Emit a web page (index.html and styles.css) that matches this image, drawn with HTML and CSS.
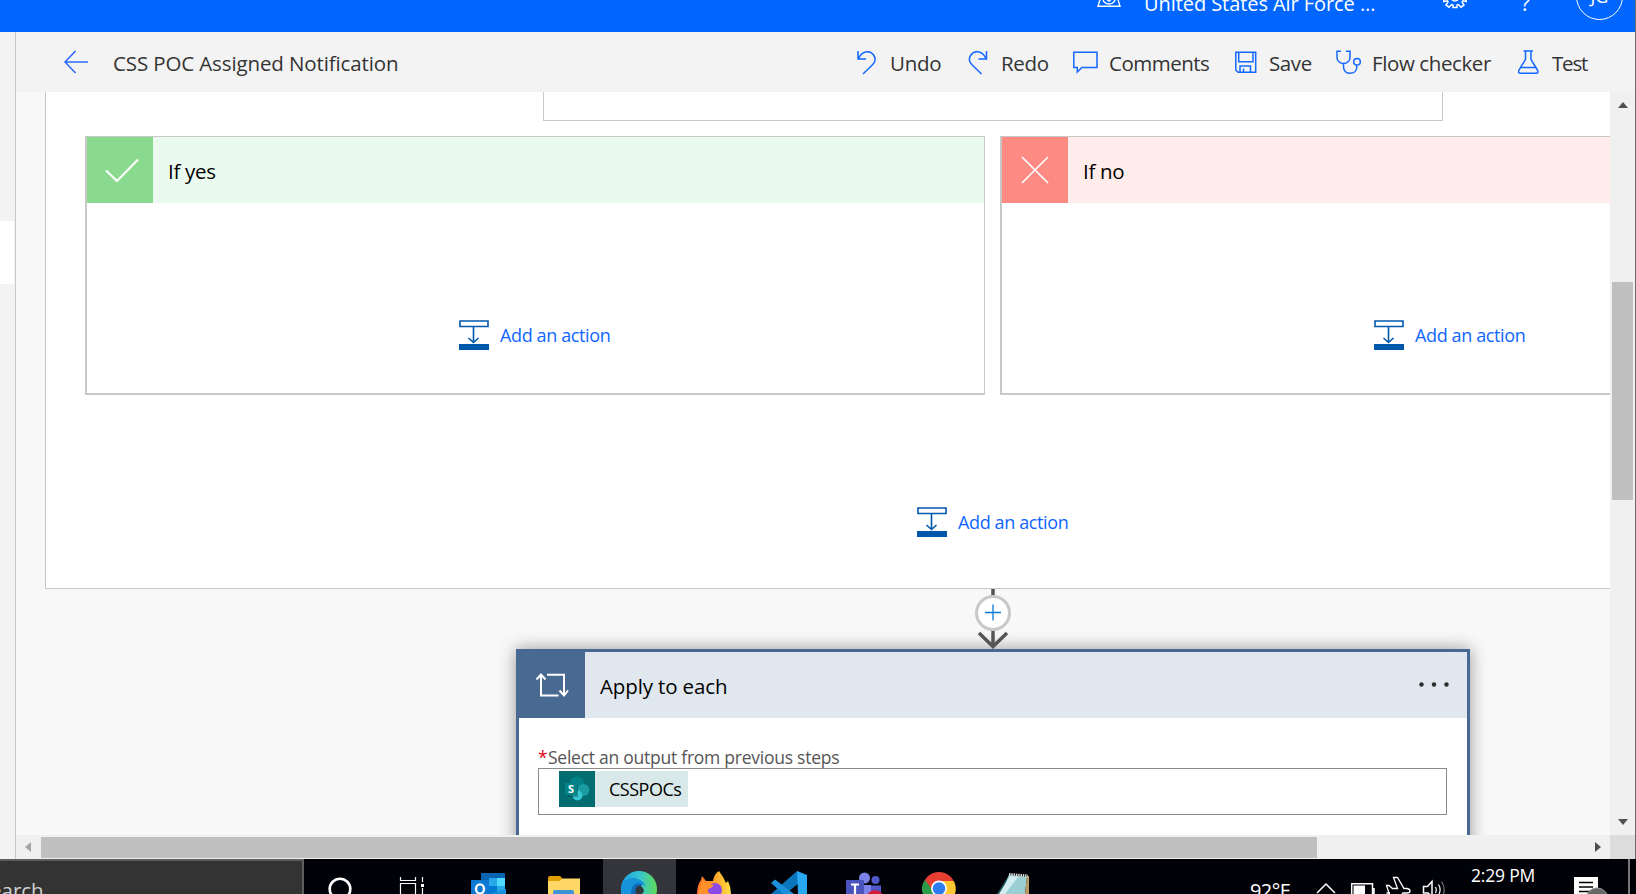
FILE: index.html
```html
<!DOCTYPE html>
<html lang="en">
<head>
<meta charset="utf-8">
<title>CSS POC Assigned Notification</title>
<link rel="stylesheet" href="styles.css">
</head>
<body>
<div class="screen">
  <div class="browser">
    <header class="topbar">
      <svg class="env-icon" width="24" height="32" viewBox="0 0 24 32" fill="none" stroke="#fff" stroke-width="1.4"><path d="M3.5 -2L1 6.3H23L20.5 -2M6 -1A6 5 0 0 0 18 -1"/><circle cx="12" cy="-.5" r="1.5"/></svg>
      <span class="env-name">United States Air Force ...</span>
      <svg class="gear" width="24" height="32" viewBox="0 0 24 32" fill="none" stroke="#fff" stroke-width="1.5"><path d="M.8 -1V1.5L4.2 .8L5 2L3 5L6 7.2L8.5 4.6L10 5V7.4H14V5L15.5 4.6L18 7.2L21 5L19 2L20 .8L23.2 1.5V-1"/><path d="M9 0Q12 2 15 0"/></svg>
      <span class="help">?</span>
      <span class="avatar"><span class="initials">JG</span></span>
    </header>
    <div class="main">
      <nav class="rail"><div class="rail-item"></div></nav>
      <div class="designer">
        <div class="toolbar">
          <svg class="back" width="24" height="24" viewBox="0 0 24 24" fill="none" stroke="#2a6cff" stroke-width="1.6"><path d="M24 12H1M11.5 1L1 12L11.5 23"/></svg>
          <span class="flow-title">CSS POC Assigned Notification</span>
          <div class="commands">
            <span class="cmd undo"><svg width="20" height="26" viewBox="0 0 20 26"><path d="M1 1V9H9M1.5 8.5C4 3.5 7 1.6 10.5 1.8C16 2 19.5 7.5 17.5 12C17 13.2 16 14.2 15 15.2L6 24"/></svg><span>Undo</span></span>
            <span class="cmd redo"><svg width="20" height="26" viewBox="0 0 20 26"><path d="M18.5 1V9H10.5M18 8.5C15.500 3.500 12.500 1.600 9 1.800C3.500 2 0 7.500 2 12C2.500 13.200 3.500 14.200 4.500 15.200L13.500 24"/></svg><span>Redo</span></span>
            <span class="cmd comments"><svg width="25" height="26" viewBox="0 0 25 26"><path d="M.8 2.200H24V17.500H9L4.300 22V17.500H.8Z"/></svg><span>Comments</span></span>
            <span class="cmd save"><svg width="22" height="26" viewBox="0 0 22 26"><path d="M.8 2.200H20.700V22.200H3L.8 20ZM3.700 2.400V11.700H18V2.400M5 22V16H15.500V22M8.500 22V18.500"/></svg><span>Save</span></span>
            <span class="cmd checker"><svg width="25" height="26" viewBox="0 0 25 26"><path d="M5 1.200H1V7.500C1 11 4 13.500 7.500 13.500S14 11 14 7.500V1.200H10M7.500 13.500V16.500C7.500 21 10.500 23.300 14.200 23.300S20.700 21 20.700 17.500V15"/><circle cx="21" cy="11.700" r="3.300"/></svg><span>Flow checker</span></span>
            <span class="cmd test"><svg width="21" height="26" viewBox="0 0 21 26"><path d="M5.500 1H15M7.500 1V9.500L1 20C0 22 .6 23.300 2.500 23.300H18C20 23.300 20.500 22 19.400 20L13 9.500V1M3 17.500H18"/></svg><span>Test</span></span>
          </div>
        </div>
        <div class="viewport">
          <div class="canvas">
            <section class="condition">
              <div class="condition-body"></div>
              <div class="branches">
                <div class="branch yes">
                  <div class="branch-head"><div class="branch-icon"><svg width="66" height="66" viewBox="0 0 66 66"><path d="M19 33.500L30 44L51 22.500" fill="none" stroke="#fff" stroke-width="2.200"/></svg></div><span>If yes</span></div>
                  <a class="add-action"><svg width="30" height="30" viewBox="0 0 30 30"><path d="M1 1H29V6.500H1ZM14.500 7V22M9.500 18L14.500 22.500L19.500 18" fill="none" stroke="#0058ad" stroke-width="1.600"/><path d="M0 24H30V30H0Z" fill="#0058ad"/></svg><span>Add an action</span></a>
                </div>
                <div class="branch no">
                  <div class="branch-head"><div class="branch-icon"><svg width="66" height="66" viewBox="0 0 66 66"><path d="M20 20L46 46M46 20L20 46" fill="none" stroke="#fff" stroke-width="1.700"/></svg></div><span>If no</span></div>
                  <a class="add-action"><svg width="30" height="30" viewBox="0 0 30 30"><path d="M1 1H29V6.500H1ZM14.500 7V22M9.500 18L14.500 22.500L19.500 18" fill="none" stroke="#0058ad" stroke-width="1.600"/><path d="M0 24H30V30H0Z" fill="#0058ad"/></svg><span>Add an action</span></a>
                </div>
              </div>
              <a class="add-action outer"><svg width="30" height="30" viewBox="0 0 30 30"><path d="M1 1H29V6.500H1ZM14.500 7V22M9.500 18L14.500 22.500L19.500 18" fill="none" stroke="#0058ad" stroke-width="1.600"/><path d="M0 24H30V30H0Z" fill="#0058ad"/></svg><span>Add an action</span></a>
            </section>
            <svg class="connector" width="38" height="60" viewBox="0 0 38 60" fill="none"><path d="M19 0V58" stroke="#555" stroke-width="3.500"/><path d="M5 44L19 57.500L33 44" stroke="#555" stroke-width="3.500"/><circle cx="19" cy="24" r="16.500" fill="#fff" stroke="#c8c8c8" stroke-width="3"/><path d="M11 23.500H27M19 15.500V31.500" stroke="#0a78d6" stroke-width="1.300"/></svg>
            <section class="loop">
              <div class="loop-head">
                <div class="loop-icon"><svg width="34" height="26" viewBox="0 0 34 26" fill="none" stroke="#fff" stroke-width="2"><path d="M6 3V23.500H23.500M1.500 7.500L6 2.500L10.500 7.500M12 2.800H29V23M24.500 18.500L29 23.500L33 18.500"/></svg></div>
                <span class="loop-title">Apply to each</span>
                <svg class="dots" width="30" height="6" viewBox="0 0 30 6" fill="#2b2b2b"><circle cx="2.500" cy="2.500" r="2.200"/><circle cx="15" cy="2.500" r="2.200"/><circle cx="27.500" cy="2.500" r="2.200"/></svg>
              </div>
              <div class="loop-body">
                <div class="label"><span class="req">*</span><span class="label-text">Select an output from previous steps</span></div>
                <div class="field"><div class="chip">
                  <svg width="36" height="36" viewBox="0 0 36 36"><path fill="#036c70" d="M0 0H36V36H0Z"/><circle cx="18" cy="12.500" r="7" fill="#038387"/><circle cx="24.500" cy="19" r="6" fill="#1a9ba1"/><circle cx="18.500" cy="24.500" r="5" fill="#37c6d0"/><path fill="#025c60" opacity=".5" d="M8 13H19V26H8Z"/><rect x="6" y="12" width="12" height="12" rx="1" fill="#038387"/><text class="sp-letter" x="12" y="22">S</text></svg>
                  <span class="chip-text">CSSPOCs</span></div></div>
              </div>
            </section>
          </div>
          <div class="vscroll"><i class="arrow up"></i><div class="vthumb"></div><i class="arrow down"></i></div>
        </div>
        <div class="hscroll">
          <div class="htrack"><i class="arrow left"></i><div class="hthumb"></div><i class="arrow right"></i></div>
          <div class="corner"></div>
        </div>
      </div>
    </div>
  </div>
  <footer class="taskbar">
    <div class="search"><span>earch</span></div>
    <div class="app"><svg width="73" height="35" viewBox="303 859 73 35"><circle cx="340" cy="889" r="10.300" fill="none" stroke="#fff" stroke-width="2.600"/></svg></div>
    <div class="app"><svg width="80" height="35" viewBox="376 859 80 35"><path d="M400.500 877V880.500H415.500V877M400.500 894V883.500H415.500V894M422.500 877V882M422.500 888V894" fill="none" stroke="#fff" stroke-width="1.200"/><path d="M421 884H424V887H421Z" fill="#fff"/></svg></div>
    <div class="app"><svg width="72" height="35" viewBox="456 859 72 35"><rect x="481" y="873" width="24" height="26" rx="1" fill="#0a64b4"/><path fill="#28a8ea" d="M489 878H497V886H489Z"/><path fill="#50d9ff" d="M497 878H505V886H497Z"/><path fill="#0078d4" d="M489 886H497V894H489Z"/><path fill="#28a8ea" d="M497 886H505V894H497Z"/><path fill="#1490df" d="M489 894L506 889V894Z"/><rect x="471" y="880" width="18" height="18" rx="1" fill="#0f78d4"/><ellipse cx="480" cy="889" rx="4" ry="4.600" fill="none" stroke="#fff" stroke-width="2.400"/></svg></div>
    <div class="app"><svg width="75" height="35" viewBox="528 859 75 35"><path fill="#e09f05" d="M548 878Q548 876 550 876H560L563 879H574V885H548Z"/><path fill="#ffd766" d="M548 881H559L563 878.500H580V894H548Z"/><path fill="#3c93d8" d="M553 894V892Q553 890 555 890H572Q574 890 574 892V894Z"/></svg></div>
    <div class="app active"><svg width="73" height="35" viewBox="603 859 73 35"><defs><linearGradient id="edge"><stop offset="0" stop-color="#1b9de2"/><stop offset=".5" stop-color="#35c4d4"/><stop offset="1" stop-color="#5fdc55"/></linearGradient></defs><circle cx="639" cy="889" r="18" fill="url(#edge)"/><path fill="#0c6cb8" d="M621 889C623 877 637 875 643 883L637 894H621Z"/><path fill="#1594dc" d="M621 888C624 876 642 875 646 887C639 880 631 883 631 894H621Z"/><path fill="#33363b" d="M636 894Q634 887 639 885.500Q643 886 644 891L642 894Z"/></svg></div>
    <div class="app"><svg width="74" height="35" viewBox="676 859 74 35"><defs><linearGradient id="fox" x2="1"><stop offset="0" stop-color="#ff6a26"/><stop offset=".6" stop-color="#ffad2b"/><stop offset="1" stop-color="#ffe146"/></linearGradient></defs><path fill="url(#fox)" d="M697 894Q697 885 701 880L702 876L706 881L713 881Q714 874 719 871L723 877L726 883L728 881Q731 887 731 894Z"/><circle cx="715" cy="890" r="7" fill="#8d49e8"/><path fill="#ff912b" d="M698 894L702 880L707 884L714 885Q711 889 707 889Q706 893 711 894Z"/></svg></div>
    <div class="app"><svg width="76" height="35" viewBox="750 859 76 35"><path fill="#0a75bd" d="M771 894L797 871L799 883L783 896Z"/><path fill="#1a91da" d="M771 883L775 879.500L798 897H787Z"/><path fill="#28a9f2" d="M797 871L807 875V894H798Z"/></svg></div>
    <div class="app"><svg width="74" height="35" viewBox="826 859 74 35"><circle cx="864.500" cy="878" r="5.500" fill="#7b83eb"/><circle cx="875.500" cy="880" r="4" fill="#5059c9"/><path fill="#5059c9" d="M870 885.500H881V894H870Z"/><path fill="#7b83eb" d="M856 885H871V894H856Z"/><rect x="846" y="880" width="18" height="18" rx="1" fill="#4b53bc"/><path stroke="#fff" stroke-width="2.200" d="M851 884.500H859M855 884.500V894"/><circle cx="875" cy="899" r="9" fill="#d51d3b"/></svg></div>
    <div class="app"><svg width="76" height="35" viewBox="900 859 76 35"><circle cx="939" cy="888.500" r="16.500" fill="#e63e32"/><path fill="#2a9d48" d="M925 880Q920 887 923 894H934L931 888Z"/><path fill="#fcc72f" d="M939 881H953.700Q957 887 955 894H942Z"/><circle cx="939" cy="888.500" r="8" fill="#fff"/><circle cx="939" cy="888.500" r="6.300" fill="#2d7df0"/></svg></div>
    <div class="app"><svg width="74" height="35" viewBox="976 859 74 35"><path fill="#1b5a60" d="M997 894L1009 875L1012 894Z"/><path fill="#9bcfd4" d="M1009 875L1027 877L1025 894H1001Z"/><path fill="#d2eef0" d="M1010 876L1018 877L1005 894H999Z"/><path fill="#b99b62" d="M1027 876H1029V894H1025Z"/><path stroke="#d8d8d8" stroke-width="3" stroke-dasharray="1.500 .8" d="M1009 874.500L1028 876"/></svg></div>
    <div class="tray">
      <span class="weather">92°F</span>
      <svg width="150" height="35" viewBox="1309 859 150 35" fill="none" stroke="#fff" stroke-width="1.500"><path d="M1317 893L1326 884L1335 893"/><path d="M1351.700 896V883.700H1372.500V896M1374 888V894"/><path fill="#fff" stroke="none" d="M1353.500 885.500H1365V894H1353.500Z"/><path stroke-width="1.300" d="M1390 896L1386.500 885.500H1389L1392.500 888.500H1397.500L1393.500 877.500H1397.500L1404 888.500H1407Q1410 889 1410 891Q1410 893 1407 893H1403L1401 896M1386.500 893H1390"/><path d="M1431.500 896L1428 893H1423.500V886.500H1427.500L1432 881.500V896"/><path stroke-width="1.200" d="M1435.500 887Q1437 890 1435.500 893M1438.500 884.500Q1441.500 889 1439 894"/><path stroke="#777" stroke-width="1.200" d="M1441.500 881.500Q1446 888 1443 895"/></svg>
      <span class="clock">2:29 PM</span>
      <svg class="notify" width="40" height="35" viewBox="1570 859 40 35"><path fill="#fff" d="M1574 877H1598V896H1574Z"/><path stroke="#000" stroke-width="1.300" d="M1579 882.500H1593M1579 887H1593M1579 891.500H1590"/><circle cx="1597" cy="899" r="11" fill="#666" stroke="#999" stroke-width="1"/></svg>
      <div class="peek"></div>
    </div>
  </footer>
</div>
</body>
</html>
```
FILE: styles.css
```css
* { box-sizing: border-box; }
body { margin: 0; font-family: "Open Sans", "Noto Sans", sans-serif; color: #000; }
.screen { width: 1636px; height: 894px; overflow: hidden; display: flex; flex-direction: column; }
.browser { height: 859px; display: flex; flex-direction: column; border-right: 1px solid #6b6b6b; }
svg { display: block; flex: none; }
span { white-space: nowrap; }

.topbar { height: 32px; flex: none; background: #0066ff; color: #fff; display: flex; padding-left: 1097px; overflow: hidden; }
.env-name { margin: -12px 0 0 23px; width: 299px; font-size: 20px; line-height: 32px; letter-spacing: -.07px; }
.help { width: 12px; margin: -13px 0 0 54px; font-size: 21px; line-height: 32px; }
.avatar { width: 47px; height: 47px; margin: -27px 0 0 43px; border: 1px solid #fff; border-radius: 50%; display: flex; justify-content: center; }
.initials { font-size: 18px; line-height: 45px; }

.main { flex: 1; min-height: 0; display: flex; }
.rail { width: 16px; flex: none; background: #f3f3f3; border-right: 1px solid #c8c8c8; padding-top: 189px; }
.rail-item { width: 14px; height: 63px; background: #fff; border-radius: 0 2px 2px 0; }
.designer { flex: 1; min-width: 0; display: flex; flex-direction: column; }
.toolbar { height: 60px; flex: none; background: #f3f3f3; display: flex; align-items: flex-start; padding: 18px 0 0 48px; color: #333; font-size: 20.5px; line-height: 26px; }
.back { margin-right: 25px; }
.flow-title { width: 744px; letter-spacing: -.12px; }
.commands { display: flex; }
.commands > .cmd { display: flex; letter-spacing: -.3px; }
.cmd svg { fill: none; stroke: #1568ff; stroke-width: 1.500; }
.undo { width: 111px; gap: 13px; }
.redo { width: 105px; gap: 13px; }
.commands > .comments { width: 162px; gap: 11px; letter-spacing: -.5px; }
.commands > .save { width: 101px; gap: 12px; letter-spacing: -.4px; }
.commands > .checker { width: 182px; gap: 11px; letter-spacing: -.4px; }
.commands > .test { gap: 13px; letter-spacing: -1.2px; }

.viewport { height: 743px; flex: none; display: flex; }
.canvas { flex: 1; min-width: 0; overflow: hidden; background: #f8f8f8; padding-left: 29px; display: flex; flex-direction: column; align-items: flex-start; }
.condition { width: 1896px; height: 497px; flex: none; background: #fff; border: 1px solid #c8c8c8; border-top: 0; }
.condition-body { width: 900px; height: 29px; margin: 0 0 15px 497px; border: 1px solid #c8c8c8; border-top: 0; }
.branches { display: flex; gap: 15px; padding-left: 39px; }
.branch { width: 900px; height: 259px; flex: none; border: 1px solid #c8c8c8; border-left-width: 2px; border-bottom-width: 2px; }
.branch-head { height: 66px; display: flex; align-items: center; gap: 15px; font-size: 20.5px; letter-spacing: -.3px; }
.branch-head span { padding-top: 2px; }
.yes .branch-head { background: #ebfaee; }
.no .branch-head { background: #ffeceb; }
.yes .branch-icon { background: #89da8f; }
.no .branch-icon { background: #fd8a83; }
.add-action { display: flex; align-items: center; gap: 11px; margin: 117px 0 0 372px; height: 30px; color: #0f66ff; font-size: 18px; letter-spacing: -.38px; }
.add-action.outer { margin: 112px 0 0 871px; }
.connector { position: relative; z-index: 1; margin-left: 929px; }
.loop { width: 954px; height: 260px; flex: none; margin-left: 471px; background: #fff; border: 3px solid #486991; box-shadow: 0 0 16px rgba(0,0,0,.4); }
.loop-head { height: 66px; background: #e1e7ee; display: flex; align-items: center; }
.loop-icon { width: 66px; height: 66px; background: #486991; display: flex; align-items: center; padding-left: 16px; }
.loop-title { width: 834px; padding: 2px 0 0 15px; font-size: 20.5px; letter-spacing: -.13px; }
.loop-body { padding: 26px 0 0 19px; }
.label { display: flex; height: 24px; line-height: 26px; font-size: 17.5px; letter-spacing: -.25px; color: #555; }
.req { color: #e00b1c; width: 10px; }
.field { width: 909px; height: 47px; border: 1px solid #8a8a8a; padding: 2px 0 0 20px; }
.chip { width: 129px; height: 36px; background: #d9e8e8; display: flex; align-items: center; gap: 14px; }
.chip-text { font-size: 18px; letter-spacing: -.5px; }
.sp-letter { font: 700 11px "Open Sans", sans-serif; fill: #fff; text-anchor: middle; }

.vscroll { width: 25px; flex: none; background: #f0f0f0; display: flex; flex-direction: column; align-items: center; padding-top: 10px; }
.vthumb { width: 21px; height: 218px; background: #c0c0c0; margin: 174px 0 319px; }
.arrow { width: 0; height: 0; flex: none; border: 5.500px solid transparent; }
.up { border-top: 0; border-bottom: 6px solid #505050; }
.down { border-bottom: 0; border-top: 6px solid #505050; }
.left { border-left: 0; border-right: 6px solid #a3a3a3; }
.right { border-right: 0; border-left: 6px solid #505050; }
.hscroll { height: 24px; display: flex; background: #f0f0f0; }
.htrack { flex: 1; display: flex; align-items: center; padding-left: 9px; }
.hthumb { width: 1276px; height: 21px; margin: 1px 278px 0 10px; background: #c0c0c0; }
.corner { width: 25px; background: #dcdcdc; }

.taskbar { height: 35px; background: #010108; color: #fff; display: flex; overflow: hidden; }
.search { width: 304px; margin-right: -1px; flex: none; background: #333; border: 2px solid #5e5e5e; border-width: 2px 2px 0 0; color: #d0d0d0; overflow: hidden; }
.search span { display: block; margin: 15px 0 0 -10px; font-size: 20.5px; line-height: 28px; }
.app { flex: none; overflow: hidden; }
.active { background: #34353a; }
.tray { display: flex; flex: 1; padding-left: 200px; }
.weather { width: 59px; margin-top: 18px; font-size: 20px; line-height: 28px; letter-spacing: -.6px; }
.clock { width: 99px; margin-left: 12px; padding-top: 4px; font-size: 17.5px; line-height: 25px; letter-spacing: -.2px; }
.notify { margin-right: 18px; }
.peek { width: 2px; height: 35px; background: #777; }
```
